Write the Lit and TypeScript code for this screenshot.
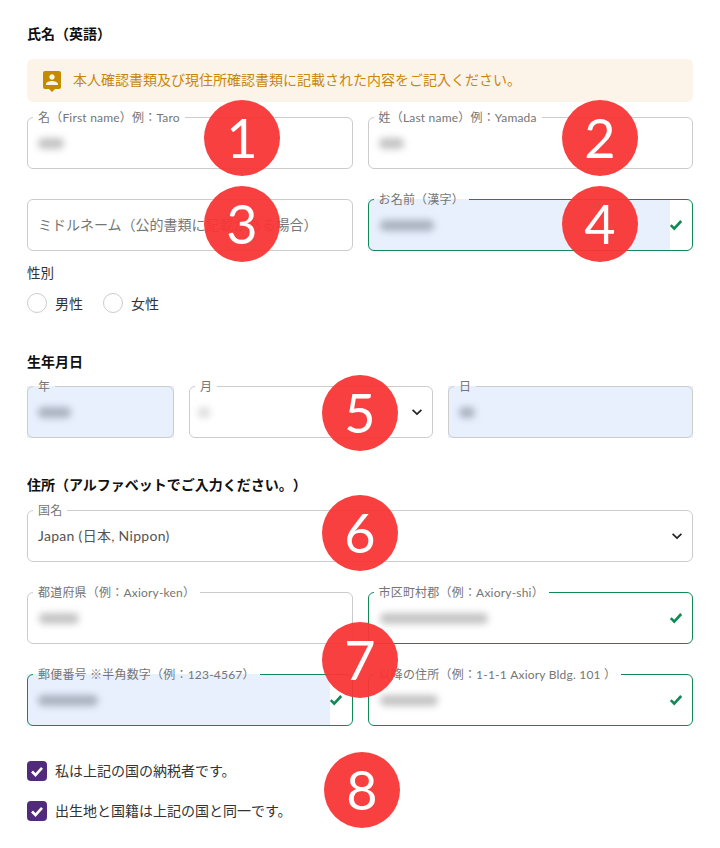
import { LitElement, html, css, nothing } from "lit";
import { customElement } from "lit/decorators.js";

interface F {
  label?: string;
  placeholder?: string;
  value?: string;
  blur?: [number, number, string?];
  auto?: boolean;
  ok?: boolean;
  chevron?: boolean;
}

const BADGES: [string, number, number][] = [
  ["1", 204, 100], ["2", 562, 100], ["3", 204, 186], ["4", 562, 186],
  ["5", 322, 375], ["6", 322, 495], ["7", 322, 622], ["8", 324, 752],
];

@customElement("app-root")
export class AppRoot extends LitElement {
  static styles = css`
    :host { display: block; width: 720px; height: 848px; background: #fff; position: relative; overflow: hidden;
      font-family: Lato, "Noto Sans CJK JP", sans-serif; color: #333; text-spacing-trim: space-all; }
    .page { padding: 25px 27px 0; display: flex; flex-direction: column; }
    .title { font-size: 14px; font-weight: 700; line-height: 18px; height: 18px; color: #111; }
    .alert { margin-top: 16px; height: 43px; box-sizing: border-box; border-radius: 6px; background: #fcf4e8; color: #c9860c;
      display: flex; align-items: center; gap: 9px; padding-left: 13px; font-size: 14px; }
    .alert span { padding-bottom: 4px; }
    .alert svg { width: 24px; height: 24px; fill: #c48a00; display: block; }
    .two { display: grid; grid-template-columns: 1fr 1fr; gap: 30px 15px; }
    .dates { display: grid; grid-template-columns: 147px 244px 1fr; gap: 15px; }
    .field { position: relative; height: 52px; display: flex; align-items: stretch; font-size: 14px; }
    .input { flex: 1; min-width: 0; display: flex; align-items: center; padding-left: 11px; }
    .input.auto { background: #e8f0fe; }
    .ph { color: #757575; font-size: 14px; white-space: nowrap; padding-bottom: 2px; }
    .val { white-space: nowrap; color: #555; letter-spacing: .3px; padding-bottom: 2px; }
    .smudge { display: block; height: 11px; border-radius: 5px; background: #c4c4c4; filter: blur(3.5px); }
    .auto .smudge { background: #aab1bf; }
    .side { width: 23px; flex: none; display: flex; align-items: center; justify-content: flex-start; }
    .side svg { display: block; overflow: visible; }
    .side.wide { width: 32px; justify-content: center; }
    .ok-mark { fill: none; stroke: #0f8a55; stroke-width: 2.6; }
    .chev-mark { fill: none; stroke: #222; stroke-width: 1.7; }
    fieldset { position: absolute; inset: -8px 0 0 0; margin: 0; padding: 0 0 0 5px; border: 1px solid #ccc;
      border-radius: 6px; pointer-events: none; min-width: 0; }
    fieldset.plain { inset: 0; }
    fieldset.green { border-color: #0f8a55; }
    legend { padding: 0 5px 0 5px; margin: 0; font-size: 12px; line-height: 17px; color: #757575; white-space: nowrap; letter-spacing: .2px; }
    .gender-label { margin-top: 13px; font-size: 13.5px; line-height: 18px; height: 18px; }
    .radios { display: flex; gap: 20px; margin-top: 11px; align-items: center; height: 20px; }
    .radio { display: flex; align-items: center; gap: 8px; font-size: 14px; }
    .dot { width: 20px; height: 20px; box-sizing: border-box; border: 1px solid #ccc; border-radius: 50%; }
    .t2 { margin-top: 40px; margin-bottom: 15px; }
    .t3 { margin-top: 38px; margin-bottom: 16px; }
    .wide-field { margin-bottom: 30px; }
    .checks { margin-top: 35px; display: flex; flex-direction: column; gap: 20px; }
    .check { display: flex; align-items: center; gap: 8px; font-size: 14px; height: 20px; }
    .check-text { padding-bottom: 2px; }
    .box { width: 20px; height: 20px; border-radius: 4px; background: #522a7a; display: flex; align-items: center; justify-content: center; }
    .box svg { width: 20px; height: 20px; fill: none; stroke: #fff; stroke-width: 2.6; }
    .badge { position: absolute; width: 76px; height: 76px; border-radius: 50%; background: #f93636; opacity: .95;
      color: #fff; display: flex; align-items: center; justify-content: center; font-size: 54px; line-height: 1; font-weight: 400; }
  `;

  private field(f: F) {
    const content = f.value
      ? html`<span class="val">${f.value}</span>`
      : f.placeholder
      ? html`<span class="ph">${f.placeholder}</span>`
      : f.blur
      ? html`<span class="smudge" style="width:${f.blur[0]}px;margin-left:${f.blur[1]}px;${f.blur[2] ?? ""}" aria-hidden="true"></span>`
      : nothing;
    return html`<div class="field">
      <div class="input ${f.auto ? "auto" : ""}">${content}</div>
      ${f.ok
        ? html`<div class="side"><svg width="12" height="10" viewBox="0 0 12 10"><polyline class="ok-mark" points="0.8,5.2 4.2,8.6 11.2,1" /></svg></div>`
        : nothing}
      ${f.chevron
        ? html`<div class="side wide"><svg width="10" height="6" viewBox="0 0 10 6"><polyline class="chev-mark" points="0.6,0.8 5,5 9.4,0.8" /></svg></div>`
        : nothing}
      <fieldset class="${f.label ? "" : "plain"} ${f.ok ? "green" : ""}">
        ${f.label ? html`<legend>${f.label}</legend>` : nothing}
      </fieldset>
    </div>`;
  }

  render() {
    return html`
      <div class="page">
        <div class="title">氏名（英語）</div>
        <div class="alert">
          <svg viewBox="0 0 24 24" aria-hidden="true"><path d="M19 2H5a2 2 0 0 0-2 2v14c0 1.1.9 2 2 2h4l3 3 3-3h4c1.1 0 2-.9 2-2V4c0-1.1-.9-2-2-2zm-7 3.3c1.49 0 2.7 1.21 2.7 2.7 0 1.49-1.21 2.7-2.7 2.7-1.49 0-2.7-1.21-2.7-2.7 0-1.49 1.21-2.7 2.7-2.7zM18 16H6v-.9c0-2 4-3.1 6-3.1s6 1.1 6 3.1v.9z"/></svg>
          <span>本人確認書類及び現住所確認書類に記載された内容をご記入ください。</span>
        </div>
        <div class="two" style="margin-top:15px">
          ${this.field({ label: "名（First name）例：Taro", blur: [26, 0] })}
          ${this.field({ label: "姓（Last name）例：Yamada", blur: [25, 0] })}
          ${this.field({ placeholder: "ミドルネーム（公的書類に記載がある場合）" })}
          ${this.field({ label: "お名前（漢字）", blur: [54, 1], auto: true, ok: true })}
        </div>
        <div class="gender-label">性別</div>
        <div class="radios">
          <label class="radio"><span class="dot"></span>男性</label>
          <label class="radio"><span class="dot"></span>女性</label>
        </div>
        <div class="title t2">生年月日</div>
        <div class="dates">
          ${this.field({ label: "年", blur: [33, 0], auto: true })}
          ${this.field({ label: "月", blur: [12, -2, "background:#dcdcdc"], chevron: true })}
          ${this.field({ label: "日", blur: [16, 0], auto: true })}
        </div>
        <div class="title t3">住所（アルファベットでご入力ください。）</div>
        <div class="wide-field">
          ${this.field({ label: "国名", value: "Japan (日本, Nippon)", chevron: true })}
        </div>
        <div class="two">
          ${this.field({ label: "都道府県（例：Axiory-ken）", blur: [40, 1] })}
          ${this.field({ label: "市区町村郡（例：Axiory-shi）", blur: [108, 1], ok: true })}
          ${this.field({ label: "郵便番号 ※半角数字（例：123-4567）", blur: [60, 0], auto: true, ok: true })}
          ${this.field({ label: "以降の住所（例：1-1-1 Axiory Bldg. 101 ）", blur: [58, 1], ok: true })}
        </div>
        <div class="checks">
          <label class="check"><span class="box"><svg viewBox="0 0 20 20"><polyline points="5,10.5 8.5,14 15,6.8" /></svg></span><span class="check-text">私は上記の国の納税者です。</span></label>
          <label class="check"><span class="box"><svg viewBox="0 0 20 20"><polyline points="5,10.5 8.5,14 15,6.8" /></svg></span><span class="check-text">出生地と国籍は上記の国と同一です。</span></label>
        </div>
      </div>
      ${BADGES.map(([n, x, y]) => html`<div class="badge" style="left:${x}px;top:${y}px">${n}</div>`)}
    `;
  }
}
